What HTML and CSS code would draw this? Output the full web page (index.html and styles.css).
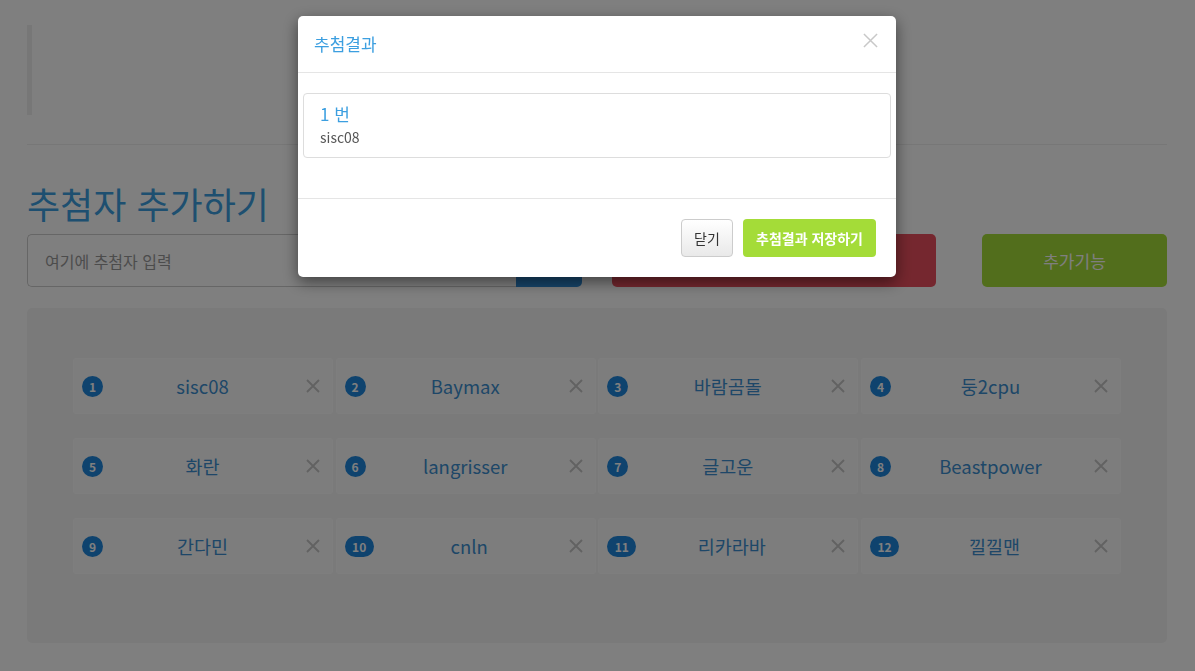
FILE: index.html
```html
<!DOCTYPE html>
<html lang="ko">
<head>
<meta charset="utf-8">
<title>추첨</title>
<link rel="stylesheet" href="styles.css">
</head>
<body class="modal-open">
<div class="container">
  <blockquote class="quote"></blockquote>
  <hr class="divider">
  <div class="row">
    <div class="col">
      <h1 class="heading">추첨자 추가하기</h1>
      <div class="input-group">
        <input class="input" type="text" placeholder="여기에 추첨자 입력">
        <button class="btn-add" type="button">추가</button>
      </div>
    </div>
    <div class="col">
      <h1 class="heading">추첨 및 추가기능</h1>
      <div class="actions">
        <button class="btn-draw" type="button">추첨하기</button>
        <button class="btn-extra" type="button">추가기능</button>
      </div>
    </div>
  </div>
  <div class="well">
    <div class="cards">
      <div class="card"><span class="badge">1</span><span class="name">sisc08</span><span class="remove"><svg viewBox="0 0 14 14" width="14" height="14"><path d="M1 1L13 13M13 1L1 13" stroke="currentColor" stroke-width="1.8" fill="none"/></svg></span></div>
      <div class="card"><span class="badge">2</span><span class="name">Baymax</span><span class="remove"><svg viewBox="0 0 14 14" width="14" height="14"><path d="M1 1L13 13M13 1L1 13" stroke="currentColor" stroke-width="1.8" fill="none"/></svg></span></div>
      <div class="card"><span class="badge">3</span><span class="name">바람곰돌</span><span class="remove"><svg viewBox="0 0 14 14" width="14" height="14"><path d="M1 1L13 13M13 1L1 13" stroke="currentColor" stroke-width="1.8" fill="none"/></svg></span></div>
      <div class="card"><span class="badge">4</span><span class="name">둥2cpu</span><span class="remove"><svg viewBox="0 0 14 14" width="14" height="14"><path d="M1 1L13 13M13 1L1 13" stroke="currentColor" stroke-width="1.8" fill="none"/></svg></span></div>
      <div class="card"><span class="badge">5</span><span class="name">화란</span><span class="remove"><svg viewBox="0 0 14 14" width="14" height="14"><path d="M1 1L13 13M13 1L1 13" stroke="currentColor" stroke-width="1.8" fill="none"/></svg></span></div>
      <div class="card"><span class="badge">6</span><span class="name">langrisser</span><span class="remove"><svg viewBox="0 0 14 14" width="14" height="14"><path d="M1 1L13 13M13 1L1 13" stroke="currentColor" stroke-width="1.8" fill="none"/></svg></span></div>
      <div class="card"><span class="badge">7</span><span class="name">글고운</span><span class="remove"><svg viewBox="0 0 14 14" width="14" height="14"><path d="M1 1L13 13M13 1L1 13" stroke="currentColor" stroke-width="1.8" fill="none"/></svg></span></div>
      <div class="card"><span class="badge">8</span><span class="name">Beastpower</span><span class="remove"><svg viewBox="0 0 14 14" width="14" height="14"><path d="M1 1L13 13M13 1L1 13" stroke="currentColor" stroke-width="1.8" fill="none"/></svg></span></div>
      <div class="card"><span class="badge">9</span><span class="name">간다민</span><span class="remove"><svg viewBox="0 0 14 14" width="14" height="14"><path d="M1 1L13 13M13 1L1 13" stroke="currentColor" stroke-width="1.8" fill="none"/></svg></span></div>
      <div class="card"><span class="badge badge-wide">10</span><span class="name">cnln</span><span class="remove"><svg viewBox="0 0 14 14" width="14" height="14"><path d="M1 1L13 13M13 1L1 13" stroke="currentColor" stroke-width="1.8" fill="none"/></svg></span></div>
      <div class="card"><span class="badge badge-wide">11</span><span class="name">리카라바</span><span class="remove"><svg viewBox="0 0 14 14" width="14" height="14"><path d="M1 1L13 13M13 1L1 13" stroke="currentColor" stroke-width="1.8" fill="none"/></svg></span></div>
      <div class="card"><span class="badge badge-wide">12</span><span class="name">낄낄맨</span><span class="remove"><svg viewBox="0 0 14 14" width="14" height="14"><path d="M1 1L13 13M13 1L1 13" stroke="currentColor" stroke-width="1.8" fill="none"/></svg></span></div>
    </div>
  </div>
</div>

<div class="backdrop"></div>
<div class="modal">
  <div class="modal-dialog">
    <div class="modal-header">
      <h4 class="modal-title">추첨결과</h4>
      <span class="close"><svg viewBox="0 0 16 16" width="15" height="15"><path d="M1 1L15 15M15 1L1 15" stroke="currentColor" stroke-width="1.6" fill="none"/></svg></span>
    </div>
    <div class="modal-body">
      <div class="result">
        <div class="result-no">1 번</div>
        <div class="result-name">sisc08</div>
      </div>
    </div>
    <div class="modal-footer">
      <button class="btn-close" type="button">닫기</button>
      <button class="btn-save" type="button">추첨결과 저장하기</button>
    </div>
  </div>
</div>
</body>
</html>
```

FILE: styles.css
```css
* { box-sizing: border-box; }
html, body { margin: 0; padding: 0; }
body {
  background: #fff;
  font-family: "Noto Sans CJK KR", "Noto Sans", sans-serif;
  font-size: 14px;
  color: #333;
  overflow: hidden;
  height: 671px;
}
.container {
  width: 1140px;
  margin: 0 0 0 27px;
}
.quote {
  margin: 25px 0 0 0;
  height: 90px;
  border-left: 5px solid #eee;
  padding: 0;
}
.divider {
  margin: 29px 0 0 0;
  border: 0;
  border-top: 1px solid #eee;
  height: 0;
}
.row {
  display: flex;
  gap: 30px;
}
.col {
  flex: 0 0 555px;
}
.heading {
  margin: 37px 0 0 0;
  font-size: 36px;
  font-weight: 400;
  line-height: 43px;
  color: #3c9fe0;
  white-space: nowrap;
}
.input-group {
  display: flex;
  margin-top: 9px;
  height: 53px;
}
.input {
  flex: 1;
  height: 53px;
  border: 1px solid #ccc;
  border-right: 0;
  border-radius: 5px 0 0 5px;
  padding: 0 17px;
  font-family: inherit;
  font-size: 16px;
  color: #555;
  background: #fff;
}
.input::placeholder { color: #999; }
.btn-add {
  width: 66px;
  height: 53px;
  border: 0;
  border-radius: 0 5px 5px 0;
  background: #2f8bd6;
  color: #fff;
  font-family: inherit;
  font-size: 17px;
}
.actions {
  display: flex;
  justify-content: space-between;
  margin-top: 9px;
}
.btn-draw, .btn-extra {
  height: 53px;
  border: 0;
  border-radius: 5px;
  color: #fff;
  font-family: inherit;
  font-size: 17px;
}
.btn-draw { width: 324px; background: #ea4f5e; }
.btn-extra { width: 185px; background: #a4dc38; }
.well {
  margin-top: 21px;
  background: #f5f5f5;
  border-radius: 5px;
  padding: 50px 46px 69px 46px;
}
.cards {
  display: grid;
  grid-template-columns: repeat(4, 260px);
  justify-content: space-between;
  row-gap: 24px;
}
.card {
  height: 56px;
  background: #fafafa;
  border: 1px solid #fdfdfd;
  border-radius: 3px;
  display: flex;
  align-items: center;
  padding: 0 12px 0 8px;
}
.badge {
  flex: 0 0 auto;
  min-width: 21px;
  height: 21px;
  border-radius: 11px;
  background: #1e86dc;
  color: #fff;
  font-size: 12px;
  font-weight: 700;
  line-height: 21px;
  text-align: center;
  padding: 0 6px;
}
.badge-wide { min-width: 29px; padding: 0 6px; }
.name {
  flex: 1;
  text-align: center;
  font-size: 18.5px;
  color: #3c8fd0;
  line-height: 1;
  padding-right: 4px;
}
.remove {
  flex: 0 0 auto;
  color: #c4c4c4;
  display: flex;
}
.backdrop {
  position: fixed;
  inset: 0;
  background: rgba(0, 0, 0, 0.5);
}
.modal {
  position: fixed;
  inset: 0;
}
.modal-dialog {
  width: 598px;
  margin: 16px 0 0 298px;
  background: #fff;
  border-radius: 5px;
  box-shadow: 0 5px 15px rgba(0, 0, 0, 0.5);
}
.modal-header {
  display: flex;
  align-items: center;
  justify-content: space-between;
  height: 57px;
  padding: 0 18px 2px 16px;
  border-bottom: 1px solid #e5e5e5;
}
.modal-title {
  margin: 0;
  font-size: 17px;
  font-weight: 400;
  color: #3c9fe0;
}
.close {
  color: #c8c8c8;
  display: flex;
  margin-top: -6px;
}
.modal-body {
  padding: 20px 5px 40px 5px;
}
.result {
  height: 65px;
  border: 1px solid #ddd;
  border-radius: 4px;
  padding: 8px 16px;
}
.result-no {
  font-size: 17px;
  line-height: 24px;
  color: #3c9fe0;
}
.result-name {
  font-size: 14px;
  line-height: 22px;
  color: #555;
}
.modal-footer {
  border-top: 1px solid #e5e5e5;
  padding: 20px 20px 20px 20px;
  display: flex;
  justify-content: flex-end;
  gap: 10px;
}
.btn-close, .btn-save {
  height: 38px;
  border-radius: 4px;
  font-family: inherit;
  font-size: 14px;
  padding: 0 12px;
}
.btn-close {
  width: 52px;
  background: linear-gradient(#fff, #e9e9e9);
  border: 1px solid #ccc;
  color: #333;
}
.btn-save {
  width: 133px;
  background: #a4dc38;
  border: 0;
  color: #fff;
  font-weight: 700;
}
```
